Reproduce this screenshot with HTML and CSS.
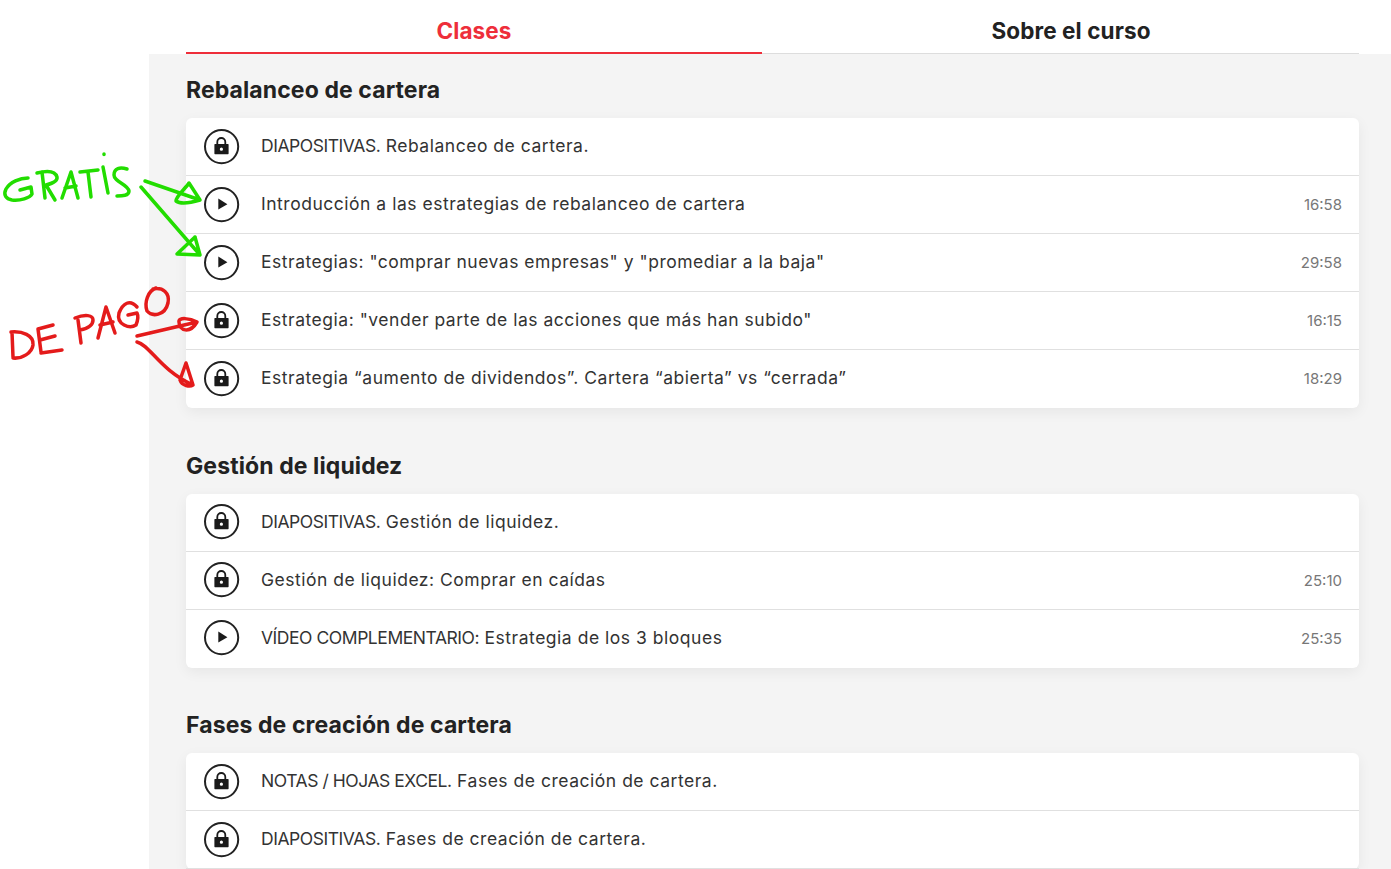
FILE: index.html
```html
<!DOCTYPE html>
<html lang="es">
<head>
<meta charset="utf-8">
<title>Clases</title>
<link rel="stylesheet" href="styles.css">
</head>
<body>
<svg class="defs" width="0" height="0" aria-hidden="true">
  <symbol id="i-lock" viewBox="0 0 36 36">
    <circle cx="17.6" cy="17.6" r="16.6" fill="none" stroke="#222" stroke-width="2"/>
    <path d="M13.3 15.5V13a4 4 0 0 1 8 0v2.5" fill="none" stroke="#1a1a1a" stroke-width="1.8"/>
    <path fill-rule="evenodd" fill="#1a1a1a" d="M11 15h13q.6 0 .6.6v9q0 .6-.6.6H11q-.6 0-.6-.6v-9q0-.6.6-.6zM17.4 18.6a1.6 1.6 0 1 0 0 3.2a1.6 1.6 0 0 0 0-3.2z"/>
  </symbol>
  <symbol id="i-play" viewBox="0 0 36 36">
    <circle cx="17.6" cy="17.6" r="16.6" fill="none" stroke="#222" stroke-width="2"/>
    <path fill="#1a1a1a" d="M14.3 11.6L23.4 17.2L14.3 22.6z"/>
  </symbol>
</svg>
<div class="page">
  <nav class="tabs">
    <div class="tab tab-active">Clases</div>
    <div class="tab tab-other">Sobre el curso</div>
  </nav>
  <main class="panel">
    <section class="section">
      <h2 class="section-title">Rebalanceo de cartera</h2>
      <ul class="card">
        <li class="row"><svg class="icon"><use href="#i-lock"/></svg><span class="row-title"><span class="caps">DIAPOSITIVAS.</span> Rebalanceo de cartera.</span></li>
        <li class="row"><svg class="icon"><use href="#i-play"/></svg><span class="row-title">Introducción a las estrategias de rebalanceo de cartera</span><span class="row-time">16:58</span></li>
        <li class="row"><svg class="icon"><use href="#i-play"/></svg><span class="row-title">Estrategias: "comprar nuevas empresas" y "promediar a la baja"</span><span class="row-time">29:58</span></li>
        <li class="row"><svg class="icon"><use href="#i-lock"/></svg><span class="row-title">Estrategia: "vender parte de las acciones que más han subido"</span><span class="row-time">16:15</span></li>
        <li class="row"><svg class="icon"><use href="#i-lock"/></svg><span class="row-title">Estrategia “aumento de dividendos”. Cartera “abierta” vs “cerrada”</span><span class="row-time">18:29</span></li>
      </ul>
    </section>
    <section class="section">
      <h2 class="section-title">Gestión de liquidez</h2>
      <ul class="card">
        <li class="row"><svg class="icon"><use href="#i-lock"/></svg><span class="row-title"><span class="caps">DIAPOSITIVAS.</span> Gestión de liquidez.</span></li>
        <li class="row"><svg class="icon"><use href="#i-lock"/></svg><span class="row-title">Gestión de liquidez: Comprar en caídas</span><span class="row-time">25:10</span></li>
        <li class="row"><svg class="icon"><use href="#i-play"/></svg><span class="row-title"><span class="caps">VÍDEO COMPLEMENTARIO:</span> Estrategia de los 3 bloques</span><span class="row-time">25:35</span></li>
      </ul>
    </section>
    <section class="section">
      <h2 class="section-title">Fases de creación de cartera</h2>
      <ul class="card">
        <li class="row"><svg class="icon"><use href="#i-lock"/></svg><span class="row-title"><span class="caps">NOTAS / HOJAS EXCEL.</span> Fases de creación de cartera.</span></li>
        <li class="row"><svg class="icon"><use href="#i-lock"/></svg><span class="row-title"><span class="caps">DIAPOSITIVAS.</span> Fases de creación de cartera.</span></li>
      </ul>
    </section>
  </main>
  <svg class="scribble" width="210" height="250" viewBox="0 150 210 250" aria-hidden="true">
    <g class="ink-green">
      <path d="M28 178C20 178 10 182 6 189C3 195 6 199 12 200C20 201 30 198 32 194L31 187L20 190"/>
      <path d="M42 172L45 198M37 173C45 171 55 170 57 177C58 182 50 184 46 185L55 200"/>
      <path d="M62 198L71 172L78 198M65 188L76 186"/>
      <path d="M80 172L98 170M88 172L91 197"/>
      <path d="M103 167L108 193M104 154L104 154.5"/>
      <path d="M127 169C120 167 114 168 114 175C114 182 128 184 129 191C129 196 122 196 117 196"/>
      <path d="M145 181L200 200L189 183C186 188 176 196 176 201C180 204 190 203 200 200"/>
      <path d="M141 187L200 255L195 237M200 255L177 254L195 237"/>
    </g>
    <g class="ink-red">
      <path d="M12 332L13 357M11 332C22 331 34 335 33 345C32 353 22 359 13 358"/>
      <path d="M38 329L53 325M38 329L41 352M40 340L55 336M41 353L62 350"/>
      <path d="M78 320L81 343M75 318C85 314 93 315 93 320C93 327 85 329 80 330"/>
      <path d="M98 338L106 307L115 333M100 325L113 322"/>
      <path d="M137 307C130 299 123 303 119 313C116 325 130 329 136 325C138 320 138 315 137 313L128 315"/>
      <path d="M156 288C148 291 144 302 147 311C152 317 165 316 168 303C170 293 163 287 153 289"/>
      <path d="M137 336L197 322C190 318 178 317 179 322C179 331 190 334 197 322"/>
      <path d="M137 342C150 345 160 370 193 385L186 363L180 380C182 386 190 387 193 385"/>
    </g>
  </svg>
</div>
</body>
</html>
```

FILE: styles.css
```css
* { box-sizing: border-box; }
html, body { margin: 0; padding: 0; height: 100%; background: #fff; overflow: hidden; }
body { font-family: Inter, "Liberation Sans", sans-serif; color: #222; }
.defs { position: absolute; }
.page { position: relative; height: 869px; overflow: hidden; }
.tabs { display: flex; height: 54px; margin: 0 32px 0 186px; }
.tab { display: flex; align-items: center; justify-content: center; padding-top: 8px; font-size: 22.5px; font-weight: 700; letter-spacing: .1px; border-bottom: 1px solid #ddd; color: #222; }
.tab-other { flex: 1; padding-left: 21px; }
.tab-active { flex: none; width: 576px; padding-top: 9px; color: #ee2e3a; border-bottom: 2px solid #ee2e3a; }
.panel { margin-left: 149px; padding: 0 32px 0 37px; background: #f4f4f4; height: 815px; }
.section { margin-bottom: 21.7px; }
.section-title { margin: 0; height: 64px; padding-top: 21px; font-size: 23px; line-height: 30px; font-weight: 700; color: #222; letter-spacing: .1px; }
.card { list-style: none; margin: 0; padding: 0; background: #fff; border-radius: 6px; box-shadow: 0 4px 14px rgba(0,0,0,.06); }
.row { display: flex; align-items: center; height: 58px; padding: 0 17px 0 18px; border-bottom: 1px solid #e0e0e0; }
.card .row:last-child { border-bottom-color: transparent; }
.section:last-child .row:last-child { border-bottom-color: #e0e0e0; }
.icon { flex: none; width: 36px; height: 36px; margin-right: 21px; }
.row-title { flex: 1; padding-bottom: 2px; font-size: 17.5px; color: #333; letter-spacing: .52px; white-space: nowrap; }
.caps { letter-spacing: -.45px; }
.row-time { font-size: 15px; color: #777; }
.scribble { position: absolute; left: 0; top: 150px; overflow: visible; }
.scribble path { fill: none; stroke-width: 3.5; stroke-linecap: round; stroke-linejoin: round; }
.ink-green path { stroke: #22dd00; }
.ink-red path { stroke: #e41b1b; }
```
